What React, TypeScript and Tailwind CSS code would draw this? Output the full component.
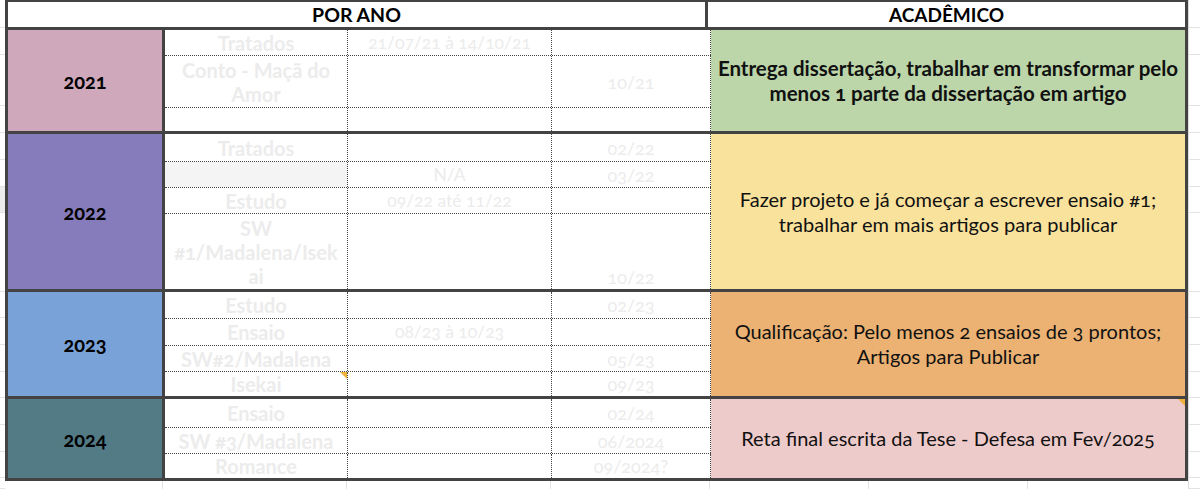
import React from "react";

type Row = {
  h: string;
  a?: React.ReactNode;
  b?: string;
  c?: string;
  cBottom?: boolean;
  aGrey?: boolean;
  tri?: boolean;
  last?: boolean;
};

type Group = {
  year: string;
  yearBg: string;
  acadBg: string;
  acadBold?: boolean;
  acad: string[];
  acadTri?: boolean;
  rows: Row[];
};

const groups: Group[] = [
  {
    year: "2021",
    yearBg: "bg-[#cfa8bb]",
    acadBg: "bg-[#bcd6aa]",
    acadBold: true,
    acad: [
      "Entrega dissertação, trabalhar em transformar pelo",
      "menos 1 parte da dissertação em artigo",
    ],
    rows: [
      { h: "h-[26px]", a: "Tratados", b: "21/07/21 à 14/10/21" },
      {
        h: "h-[52px]",
        a: (
          <>
            Conto - Maçã do
            <br />
            Amor
          </>
        ),
        c: "10/21",
      },
      { h: "h-[23px]", last: true },
    ],
  },
  {
    year: "2022",
    yearBg: "bg-[#877cbb]",
    acadBg: "bg-[#f9e29c]",
    acad: [
      "Fazer projeto e já começar a escrever ensaio #1;",
      "trabalhar em mais artigos para publicar",
    ],
    rows: [
      { h: "h-[28px]", a: "Tratados", c: "02/22" },
      { h: "h-[26px]", aGrey: true, b: "N/A", c: "03/22" },
      { h: "h-[26px]", a: "Estudo", b: "09/22 até 11/22" },
      {
        h: "h-[75px]",
        a: (
          <>
            SW
            <br />
            #1/Madalena/Isek
            <br />
            ai
          </>
        ),
        c: "10/22",
        cBottom: true,
        last: true,
      },
    ],
  },
  {
    year: "2023",
    yearBg: "bg-[#79a3d8]",
    acadBg: "bg-[#ebb273]",
    acad: [
      "Qualificação: Pelo menos 2 ensaios de 3 prontos;",
      "Artigos para Publicar",
    ],
    rows: [
      { h: "h-[27px]", a: "Estudo", c: "02/23" },
      { h: "h-[27px]", a: "Ensaio", b: "08/23 à 10/23" },
      { h: "h-[26px]", a: "SW#2/Madalena", c: "05/23" },
      { h: "h-[24px]", a: "Isekai", c: "09/23", tri: true, last: true },
    ],
  },
  {
    year: "2024",
    yearBg: "bg-[#527b86]",
    acadBg: "bg-[#eecbcb]",
    acadTri: true,
    acad: ["Reta final escrita da Tese - Defesa em Fev/2025"],
    rows: [
      { h: "h-[29px]", a: "Ensaio", c: "02/24" },
      { h: "h-[26px]", a: "SW #3/Madalena", c: "06/2024" },
      { h: "h-[24px]", a: "Romance", c: "09/2024?", last: true },
    ],
  },
];

const gutterRows: { h: string; sel?: boolean }[] = [
  { h: "h-[28px]" },
  { h: "h-[27px]" },
  { h: "h-[51px]" },
  { h: "h-[27px]" },
  { h: "h-[27px]" },
  { h: "h-[27px]" },
  { h: "h-[26px]", sel: true },
  { h: "h-[79px]" },
  { h: "h-[26px]" },
  { h: "h-[27px]" },
  { h: "h-[27px]" },
  { h: "h-[26px]" },
  { h: "h-[27px]" },
  { h: "h-[27px]" },
  { h: "h-[26px]" },
  { h: "h-[11px]" },
];

function Gutter({ right }: { right?: boolean }) {
  return (
    <div
      className={
        right
          ? "flex flex-1 flex-col border-l border-[#dcdcdc]"
          : "flex w-[5px] flex-col"
      }
    >
      {gutterRows.map((r, i) => (
        <div
          key={i}
          className={`${r.h} shrink-0 border-b border-[#e2e2e2] ${
            r.sel && !right ? "bg-[#ececec]" : ""
          }`}
        />
      ))}
    </div>
  );
}

const faint = "text-[#ececec]";
const dot = "border-[#474747] border-dotted";

function GroupRow({ g }: { g: Group }) {
  return (
    <div className="flex border-b-[3px] border-[#434343]">
      <div
        className={`flex w-[157px] shrink-0 items-center justify-center border-r-[3px] border-[#434343] ${g.yearBg}`}
      >
        <span className="text-[20px] font-bold text-black oldstyle-nums">
          {g.year}
        </span>
      </div>
      <div className="flex w-[546px] shrink-0 flex-col">
        {g.rows.map((r, i) => (
          <div
            key={i}
            className={`flex ${r.h} shrink-0 ${r.last ? "" : `border-b ${dot}`}`}
          >
            <div
              className={`relative flex w-[183px] shrink-0 items-center justify-center border-r ${dot} ${
                r.aGrey ? "bg-[#f4f4f4]" : ""
              }`}
            >
              <span
                className={`whitespace-nowrap text-center text-[20px] font-bold leading-[24px] oldstyle-nums ${faint}`}
              >
                {r.a}
              </span>
              {r.tri && (
                <span className="absolute right-0 top-0 h-0 w-0 border-l-[7px] border-t-[7px] border-l-transparent border-t-[#eeb13c]" />
              )}
            </div>
            <div
              className={`flex w-[204px] shrink-0 items-center justify-center border-r ${dot}`}
            >
              <span
                className={`whitespace-nowrap text-[17.5px] leading-[24px] oldstyle-nums ${faint}`}
              >
                {r.b}
              </span>
            </div>
            <div
              className={`flex w-[159px] shrink-0 justify-center border-r ${dot} ${
                r.cBottom ? "items-end" : "items-center"
              }`}
            >
              <span
                className={`whitespace-nowrap text-[18px] leading-[24px] oldstyle-nums ${faint}`}
              >
                {r.c}
              </span>
            </div>
          </div>
        ))}
      </div>
      <div
        className={`relative flex flex-1 items-center justify-center ${g.acadBg}`}
      >
        <div
          className={`whitespace-nowrap text-center leading-[25px] text-[#111111] oldstyle-nums ${
            g.acadBold ? "text-[20.5px] font-bold" : "text-[20px]"
          }`}
        >
          {g.acad.map((l, i) => (
            <div key={i}>{l}</div>
          ))}
        </div>
        {g.acadTri && (
          <span className="absolute right-0 top-0 h-0 w-0 border-l-[7px] border-t-[7px] border-l-transparent border-t-[#eeb13c]" />
        )}
      </div>
    </div>
  );
}

export default function App() {
  return (
    <div className="flex h-[489px] w-[1200px] overflow-hidden bg-white font-['Lato',sans-serif] text-black">
      <Gutter />
      <div className="flex w-[1183px] shrink-0 flex-col">
        <div className="flex flex-col border-x-[3px] border-t-2 border-[#434343]">
          <div className="flex h-[28px] border-b-[3px] border-[#434343]">
            <div className="flex w-[700px] shrink-0 items-center justify-center border-r-[3px] border-[#434343]">
              <span className="text-[19.5px] font-bold leading-none">POR ANO</span>
            </div>
            <div className="flex flex-1 items-center justify-center">
              <span className="text-[19px] font-bold leading-none">ACADÊMICO</span>
            </div>
          </div>
          {groups.map((g) => (
            <GroupRow key={g.year} g={g} />
          ))}
        </div>
        <div className="flex flex-1">
          <div className="w-[158px] border-r border-[#e2e2e2]" />
          <div className="w-[184px] border-r border-[#e2e2e2]" />
          <div className="w-[204px] border-r border-[#e2e2e2]" />
          <div className="w-[159px] border-r border-[#e2e2e2]" />
          <div className="w-[159px] border-r border-[#e2e2e2]" />
          <div className="w-[159px] border-r border-[#e2e2e2]" />
          <div className="flex-1" />
        </div>
      </div>
      <Gutter right />
    </div>
  );
}
